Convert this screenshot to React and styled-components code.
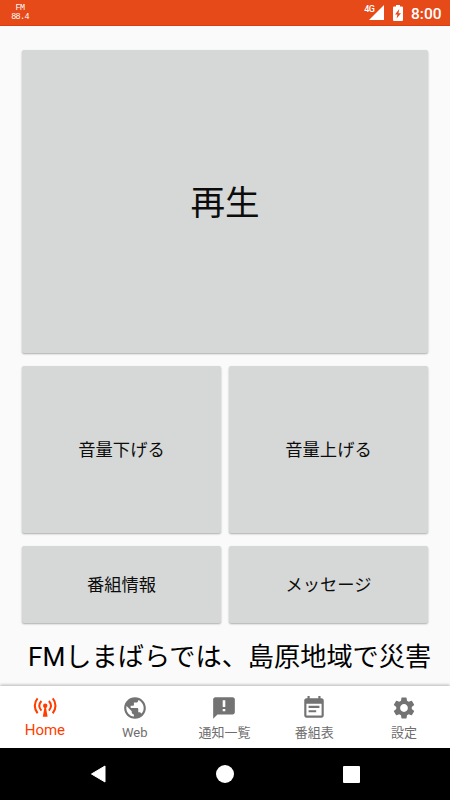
import React from 'react';
import styled, { createGlobalStyle } from 'styled-components';
import { MdPublic, MdSettings } from 'react-icons/md';

const GlobalStyle = createGlobalStyle`
  * {
    box-sizing: border-box;
  }
  body {
    margin: 0;
    background-color: #fafafa;
    font-family: Roboto, "Noto Sans CJK JP", sans-serif;
  }
`;

const Screen = styled.div`
  display: flex;
  flex-direction: column;
  width: 450px;
  height: 800px;
  overflow: hidden;
  background-color: #fafafa;
`;

const StatusBar = styled.header`
  display: flex;
  justify-content: space-between;
  align-items: center;
  height: 26px;
  padding: 0 9px 0 11px;
  background-color: #e64a19;
  border-bottom: 1px solid #dc3c12;
  color: #ffffff;
`;

const Station = styled.div`
  width: 18px;
  padding-top: 1px;
  font-family: "Liberation Mono", monospace;
  font-size: 8.5px;
  line-height: 9.5px;
  letter-spacing: -0.7px;
  text-align: center;
  white-space: nowrap;
`;

const StatusIcons = styled.div`
  display: flex;
  align-items: center;
`;

const Network = styled.span`
  align-self: flex-start;
  margin-top: 5px;
  margin-right: -5px;
  font-size: 9px;
  font-weight: 500;
  line-height: 9px;
  letter-spacing: -0.8px;
`;

const Clock = styled.span`
  width: 30px;
  margin-left: 8px;
  padding-top: 2px;
  font-size: 15.5px;
  font-weight: 500;
  line-height: 24px;
  white-space: nowrap;
`;

const Main = styled.main`
  display: flex;
  flex-direction: column;
  flex: 1;
  padding: 24px 22px 0;
`;

const Buttons = styled.div`
  display: grid;
  grid-template-columns: 1fr 1fr;
  grid-template-rows: 303px 167px 77px;
  gap: 13px 8px;
`;

const Button = styled.button`
  grid-column: ${({ $wide }) => ($wide ? 'span 2' : 'auto')};
  padding: 0 0 ${({ $wide }) => ($wide ? '4px' : '2px')};
  border: none;
  border-radius: 2px;
  background-color: #d6d8d7;
  color: #0c0c0c;
  font-family: inherit;
  font-size: ${({ $wide }) => ($wide ? '34.6px' : '17.3px')};
  box-shadow: 0 1px 2px rgba(0, 0, 0, 0.32);
`;

const Ticker = styled.p`
  margin: 15px -22px 0 6px;
  color: #000000;
  font-size: 26.2px;
  line-height: 38px;
  white-space: nowrap;
  overflow: hidden;
`;

const TabBar = styled.nav`
  display: flex;
  height: 62px;
  padding-right: 1px;
  background-color: #ffffff;
  box-shadow: 0 -1px 3px rgba(0, 0, 0, 0.28);
`;

const Tab = styled.div`
  display: flex;
  flex-direction: column;
  align-items: center;
  flex: 1;
  padding-top: ${({ $active }) => ($active ? '8px' : '9px')};
  color: ${({ $active }) => ($active ? '#ff3d00' : '#737373')};
  svg {
    display: block;
    flex: none;
  }
`;

const TabLabel = styled.span`
  margin-top: ${({ $active }) => ($active ? '0' : '2px')};
  color: ${({ $active }) => ($active ? '#ff3d00' : '#6e6e6e')};
  font-size: ${({ $active }) => ($active ? '15px' : '13px')};
  line-height: 20px;
`;

const SystemBar = styled.footer`
  display: flex;
  justify-content: space-between;
  align-items: center;
  height: 52px;
  padding: 0 90px;
  background-color: #000000;
`;

const Battery = styled.svg`
  margin-left: 9px;
`;

const SignalIcon = () => (
  <svg width="15" height="15" viewBox="0 0 15 15">
    <path d="M15 0v15H0z" fill="#fff" />
  </svg>
);

const BatteryIcon = () => (
  <Battery width="10" height="16" viewBox="0 0 10 16">
    <path d="M3 0h4v1.600h2a1 1 0 0 1 1 1V15a1 1 0 0 1-1 1H1a1 1 0 0 1-1-1V2.600a1 1 0 0 1 1-1h2z" fill="#fff" />
    <path d="M6.300 4 2 9.600h2.400L3.600 13.600 8 8.200H5.500z" fill="#e64a19" />
  </Battery>
);

const AntennaIcon = () => (
  <svg width="26" height="26" viewBox="0 0 26 26" fill="none" stroke="currentColor">
    <path d="M5.600 4.400C1.900 8.500 1.900 15 5.600 19.200M20.700 4.400C24.400 8.500 24.400 15 20.700 19.200" strokeWidth="2.100" />
    <path d="M9.400 7c-2.700 3.100-2.700 6.500 0 9.600M16.900 7c2.700 3.100 2.700 6.500 0 9.600" strokeWidth="2" />
    <circle cx="13.200" cy="11.800" r="2.200" fill="currentColor" stroke="none" />
    <path d="M12.500 13h1.400L15.600 22.800h-4.800z" fill="currentColor" stroke="none" />
  </svg>
);

const NoticeIcon = () => (
  <svg width="26" height="26" viewBox="0 0 24 24" fill="currentColor">
    <path d="M20 2H4c-1.100 0-2 .9-2 2v18l4-4h14c1.100 0 2-.9 2-2V4c0-1.100-.9-2-2-2z" />
    <path d="M10.800 4.800h2.400v6.200h-2.400zM10.800 12.900h2.400v2.200h-2.400z" fill="#fff" />
  </svg>
);

const ScheduleIcon = () => (
  <svg width="26" height="26" viewBox="0 0 24 24" fill="currentColor">
    <path d="M14 14H7v2h7v-2zm5-11h-1V1h-2v2H8V1H6v2H5c-1.100 0-2 .9-2 2v14c0 1.100.9 2 2 2h14c1.100 0 2-.9 2-2V5c0-1.100-.9-2-2-2zm0 16H5V8h14v11zm-2-9H7v2h10v-2z" />
  </svg>
);

const tabs = [
  { label: 'Home', Icon: AntennaIcon, active: true },
  { label: 'Web', Icon: MdPublic },
  { label: '通知一覧', Icon: NoticeIcon },
  { label: '番組表', Icon: ScheduleIcon },
  { label: '設定', Icon: MdSettings },
];

const App = () => {
  return (
    <Screen>
      <GlobalStyle />
      <StatusBar>
        <Station>FM<br />88.4</Station>
        <StatusIcons>
          <Network>4G</Network>
          <SignalIcon />
          <BatteryIcon />
          <Clock>8:00</Clock>
        </StatusIcons>
      </StatusBar>

      <Main>
        <Buttons>
          <Button $wide>再生</Button>
          <Button>音量下げる</Button>
          <Button>音量上げる</Button>
          <Button>番組情報</Button>
          <Button>メッセージ</Button>
        </Buttons>
        <Ticker>FMしまばらでは、島原地域で災害</Ticker>
      </Main>

      <TabBar>
        {tabs.map(({ label, Icon, active }) => (
          <Tab key={label} $active={active}>
            <Icon size={26} />
            <TabLabel $active={active}>{label}</TabLabel>
          </Tab>
        ))}
      </TabBar>

      <SystemBar>
        <svg width="17" height="18" viewBox="0 0 17 18">
          <path d="M15 1 1.500 9 15 17z" fill="#fff" stroke="#fff" strokeLinejoin="round" />
        </svg>
        <svg width="18" height="18" viewBox="0 0 18 18">
          <circle cx="9" cy="9" r="9" fill="#fff" />
        </svg>
        <svg width="17" height="17" viewBox="0 0 17 17">
          <rect width="17" height="17" rx="1" fill="#fff" />
        </svg>
      </SystemBar>
    </Screen>
  );
};

export default App;
